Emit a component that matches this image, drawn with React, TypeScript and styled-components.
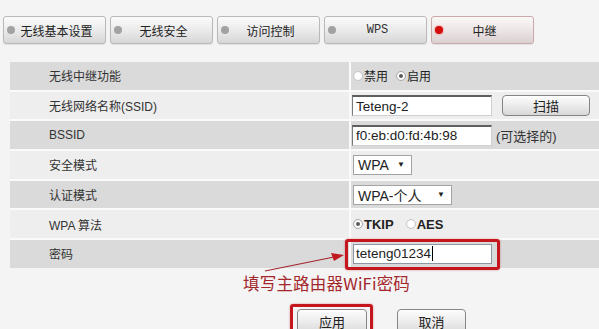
import React from "react";
import styled, { createGlobalStyle, css } from "styled-components";

const GlobalStyle = createGlobalStyle`
  html, body { margin: 0; padding: 0; background: #f4f4f4; }
  body { font-family: "Liberation Sans", "Noto Sans CJK SC", sans-serif; color: #333; }
`;

const Page = styled.div`
  width: 599px;
  height: 329px;
  overflow: hidden;
  background: #f4f4f4;
  position: relative;
`;

const TabBar = styled.div`
  display: flex;
  gap: 4px;
  padding: 16px 0 0 3px;
`;

const Tab = styled.div<{ $active?: boolean }>`
  box-sizing: border-box;
  width: 103px;
  height: 28px;
  border: 1px solid #b9b9b9;
  border-radius: 3px;
  background: linear-gradient(#fbfbfb, #e9e9e9 55%, #d6d6d6);
  display: flex;
  align-items: center;
  position: relative;
  padding-left: 4px;
  box-shadow: 0 1px 1px rgba(0, 0, 0, 0.08);
  ${(p) =>
    p.$active &&
    css`
      border-color: #c9a9a9;
      background: linear-gradient(#fbf7f7, #ece4e4 55%, #d9d1d1);
    `}
`;

const Dot = styled.span<{ $active?: boolean }>`
  position: absolute;
  left: 3px;
  top: 9px;
  width: 8px;
  height: 8px;
  border-radius: 50%;
  background: ${(p) => (p.$active ? "#d40d0d" : "#a2a2a2")};
  box-shadow: ${(p) => (p.$active ? "0 0 2px #f26060" : "none")};
`;

const TabText = styled.span<{ $mono?: boolean }>`
  flex: 1;
  text-align: center;
  font-size: 12px;
  color: #222;
  ${(p) =>
    p.$mono &&
    css`
      font-family: "Liberation Mono", monospace;
      font-size: 12px;
      color: #333;
    `}
`;

const Form = styled.div`
  margin: 18px 0 0 10px;
  width: 600px;
  display: grid;
  grid-template-columns: 339px 1fr;
  grid-auto-rows: 27.7px;
  column-gap: 2px;
  row-gap: 2px;
  background: #fafafa;
`;

const Cell = styled.div<{ $shade: boolean }>`
  background: ${(p) => (p.$shade ? "#dadada" : "#eeeeee")};
  display: flex;
  align-items: center;
`;

const Label = styled(Cell)`
  padding-left: 39px;
  font-size: 12px;
  color: #333;
`;

const Value = styled(Cell)`
  padding-left: 1px;
`;

const TextInput = styled.input<{ $w: number }>`
  box-sizing: border-box;
  width: ${(p) => p.$w}px;
  height: 21px;
  margin: 0;
  padding: 0 3px;
  border: 1px solid;
  border-top-width: 2px;
  border-color: #5e5e5e #cfcfcf #cfcfcf #7a7a7a;
  background: #fff;
  font-family: "Liberation Sans", sans-serif;
  font-size: 13.5px;
  color: #222;
  outline: none;
`;

const PasswordBox = styled.div`
  position: relative;
  display: flex;
  align-items: center;
  box-sizing: border-box;
  width: 139px;
  height: 20px;
  margin-left: 1px;
  border: 1px solid #8d96a3;
  background: #fff;
  padding-left: 2px;
  font-size: 13.5px;
  color: #222;
  &::after {
    content: "";
    position: absolute;
    left: -9px;
    right: -9px;
    top: -6px;
    bottom: -7px;
    border: 3px solid #c5161d;
    border-radius: 3px;
    box-shadow: 0 0 2px rgba(200, 20, 30, 0.5);
  }
`;

const Caret = styled.span`
  display: inline-block;
  width: 1px;
  height: 15px;
  background: #000;
  margin-left: 1px;
`;

const GrayButton = styled.div<{ $w: number; $h: number }>`
  box-sizing: border-box;
  width: ${(p) => p.$w}px;
  height: ${(p) => p.$h}px;
  border: 1px solid #858585;
  border-radius: 4px;
  background: linear-gradient(#fdfdfd, #ececec 50%, #d7d7d7);
  display: flex;
  align-items: center;
  justify-content: center;
  font-size: 13px;
  color: #222;
  position: relative;
  box-shadow: inset 0 1px 0 #fff;
`;

const ScanButton = styled(GrayButton)`
  margin-left: 10px;
`;

const Hint = styled.span`
  margin-left: 4px;
  font-size: 13px;
  color: #333;
`;

const RadioGroup = styled.div`
  display: flex;
  align-items: center;
  margin-left: 1px;
`;

const RadioItem = styled.label<{ $bold?: boolean }>`
  display: flex;
  align-items: center;
  margin-right: ${(p) => (p.$bold ? "12px" : "8px")};
  font-size: ${(p) => (p.$bold ? "13px" : "12px")};
  font-weight: ${(p) => (p.$bold ? "bold" : "normal")};
  color: #222;
`;

const Radio = styled.span<{ $on?: boolean }>`
  box-sizing: border-box;
  width: 10px;
  height: 10px;
  border-radius: 50%;
  border: 1px solid ${(p) => (p.$on ? "#a9a9a9" : "#c8c8c8")};
  background: radial-gradient(circle, #fff 40%, #ececec);
  margin-right: 1px;
  position: relative;
  ${(p) =>
    p.$on &&
    css`
      &::after {
        content: "";
        position: absolute;
        left: 2px;
        top: 2px;
        width: 4px;
        height: 4px;
        border-radius: 50%;
        background: #5a5a5a;
      }
    `}
`;

const Select = styled.div<{ $w: number }>`
  box-sizing: border-box;
  width: ${(p) => p.$w}px;
  height: 20px;
  border: 1px solid #a3a3a3;
  background: #fff;
  display: flex;
  align-items: center;
  justify-content: space-between;
  padding: 0 6px 0 4px;
  font-size: 14px;
  color: #222;
  margin-left: 1px;
`;

const Arrow = styled.span`
  font-size: 8px;
  color: #222;
`;

const Annotation = styled.div`
  position: relative;
  height: 37px;
`;

const Note = styled.div`
  position: absolute;
  left: 243px;
  top: 4px;
  font-family: "Noto Sans CJK SC", "Liberation Sans", sans-serif;
  font-size: 16.5px;
  line-height: 22px;
  color: #a3262b;
  letter-spacing: 0.2px;
`;

const ArrowSvg = styled.svg`
  position: absolute;
  left: 0;
  top: -20px;
  overflow: visible;
`;

const Actions = styled.div`
  display: flex;
  gap: 30px;
  padding: 4px 0 0 297px;
`;

const Highlighted = styled.div`
  position: relative;
  &::after {
    content: "";
    position: absolute;
    left: -7px;
    right: -6px;
    top: -5px;
    bottom: -8px;
    border: 3px solid #c5161d;
    border-radius: 3px;
    box-shadow: 0 0 2px rgba(200, 20, 30, 0.5);
  }
`;

const tabs = [
  { text: "无线基本设置" },
  { text: "无线安全" },
  { text: "访问控制" },
  { text: "WPS", mono: true },
  { text: "中继", active: true },
];

export default function App() {
  return (
    <Page>
      <GlobalStyle />
      <TabBar>
        {tabs.map((t) => (
          <Tab key={t.text} $active={t.active}>
            <Dot $active={t.active} />
            <TabText $mono={t.mono}>{t.text}</TabText>
          </Tab>
        ))}
      </TabBar>

      <Form>
        <Label $shade>无线中继功能</Label>
        <Value $shade>
          <RadioGroup>
            <RadioItem>
              <Radio />
              禁用
            </RadioItem>
            <RadioItem>
              <Radio $on />
              启用
            </RadioItem>
          </RadioGroup>
        </Value>

        <Label $shade={false}>无线网络名称(SSID)</Label>
        <Value $shade={false}>
          <TextInput $w={140} readOnly value="Teteng-2" />
          <ScanButton $w={88} $h={21}>扫描</ScanButton>
        </Value>

        <Label $shade>BSSID</Label>
        <Value $shade>
          <TextInput $w={140} readOnly value="f0:eb:d0:fd:4b:98" />
          <Hint>(可选择的)</Hint>
        </Value>

        <Label $shade={false}>安全模式</Label>
        <Value $shade={false}>
          <Select $w={59}>
            WPA<Arrow>▼</Arrow>
          </Select>
        </Value>

        <Label $shade>认证模式</Label>
        <Value $shade>
          <Select $w={99}>
            WPA-个人<Arrow>▼</Arrow>
          </Select>
        </Value>

        <Label $shade={false}>WPA 算法</Label>
        <Value $shade={false}>
          <RadioGroup>
            <RadioItem $bold>
              <Radio $on />
              TKIP
            </RadioItem>
            <RadioItem $bold>
              <Radio />
              AES
            </RadioItem>
          </RadioGroup>
        </Value>

        <Label $shade>密码</Label>
        <Value $shade>
          <PasswordBox>
            teteng01234
            <Caret />
          </PasswordBox>
        </Value>
      </Form>

      <Annotation>
        <ArrowSvg width="1" height="1">
          <line x1="265" y1="23" x2="334" y2="9" stroke="#a3262b" strokeWidth="1.2" />
          <polygon points="344,7 331,5 334,13" fill="#c01a20" />
        </ArrowSvg>
        <Note>填写主路由器WiFi密码</Note>
      </Annotation>

      <Actions>
        <Highlighted>
          <GrayButton $w={70} $h={26}>应用</GrayButton>
        </Highlighted>
        <GrayButton $w={69} $h={26}>取消</GrayButton>
      </Actions>
    </Page>
  );
}
